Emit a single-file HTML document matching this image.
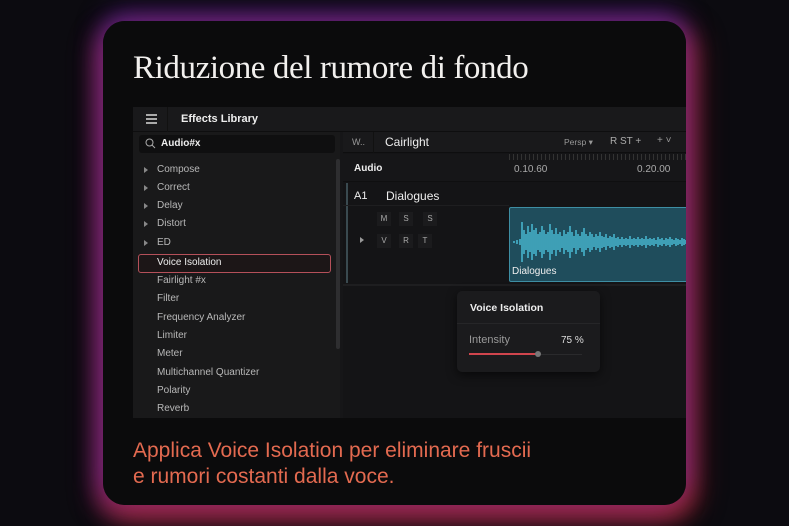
<!DOCTYPE html>
<html><head><style>
*{margin:0;padding:0;box-sizing:border-box}
body{width:789px;height:526px;overflow:hidden;background:#0c0b10;font-family:"Liberation Sans",sans-serif;position:relative}
.glow{position:absolute;left:103px;top:21px;width:583px;height:484px;border-radius:22px;box-shadow:0 -8px 24px 2px rgba(110,40,190,.55),10px 8px 26px 3px rgba(200,45,55,.5),-8px 8px 26px 2px rgba(150,35,130,.45),0 12px 24px 3px rgba(200,60,70,.5)}
.card{position:absolute;left:103px;top:21px;width:583px;height:484px;border-radius:22px;background:#0b0b0c;overflow:hidden}
h1{position:absolute;left:30px;top:29px;font-family:"Liberation Serif",serif;font-weight:normal;font-size:33px;color:#f2f0ee;letter-spacing:-.4px}
.panel{position:absolute;left:30px;top:86px;width:560px;height:311px;background:#161618;color:#ccc;font-size:10px}
.hdr{position:absolute;left:0;top:0;width:560px;height:25px;background:#19191b;border-bottom:1px solid #0e0e0f}
.side{position:absolute;left:0;top:25px;width:207px;height:286px;background:#19191a}
.search{position:absolute;left:6px;top:3px;width:196px;height:18px;background:#0f0f10;border-radius:3px;color:#eee;font-weight:bold;font-size:10px;padding:3px 0 0 22px}
.item{position:absolute;left:24px;font-size:10px;color:#b8b8b8}
.arr{position:absolute;left:11px;width:0;height:0;border-left:4px solid #888;border-top:3px solid transparent;border-bottom:3px solid transparent}
.sel{position:absolute;left:5px;top:122px;width:193px;height:19px;border:1px solid #b5505a;border-radius:3px;background:#1c1617}
.right{position:absolute;left:210px;top:25px;width:350px;height:286px;background:#141416}
.tabs{position:absolute;left:0;top:0;width:350px;height:21px;background:#19191b;border-bottom:1px solid #0e0e0f}
.clip{position:absolute;left:166px;top:75px;width:184px;height:75px;background:#1f4d5c;border:1px solid #3e8ea3;border-radius:2px 0 0 2px}
.pop{position:absolute;left:114px;top:159px;width:143px;height:81px;background:#1b1b1d;border-radius:5px;box-shadow:0 3px 10px rgba(0,0,0,.6)}
.btn{position:absolute;font-size:8px;color:#aaa;width:14px;height:14px;background:#1b1b1d;text-align:center;line-height:14px}
.sub{position:absolute;left:30px;top:417px;font-size:21px;line-height:26px;color:#e36a50}
</style></head><body>
<div class="glow"></div>
<div class="card">
<h1>Riduzione del rumore di fondo</h1>
<div class="panel">
 <div class="hdr">
  <div style="position:absolute;left:13px;top:7px;width:11px;height:1.5px;background:#aaa;box-shadow:0 4px 0 #aaa,0 8px 0 #aaa"></div>
  <div style="position:absolute;left:34px;top:0;width:1px;height:25px;background:#111"></div>
  <div style="position:absolute;left:48px;top:6px;font-size:11px;font-weight:bold;color:#eee">Effects Library</div>
 </div>
 <div class="side">
  <div class="search"><svg style="position:absolute;left:6px;top:3px" width="11" height="11" viewBox="0 0 11 11"><circle cx="4.5" cy="4.5" r="3.5" stroke="#aaa" fill="none"/><path d="M7 7l3 3" stroke="#aaa"/></svg>Audio#x</div>
  <div style="position:absolute;left:203px;top:27px;width:4px;height:190px;background:#2e2e30;border-radius:2px"></div>
  <div class="arr" style="top:35px"></div><div class="item" style="top:32px">Compose</div>
  <div class="arr" style="top:53px"></div><div class="item" style="top:50px">Correct</div>
  <div class="arr" style="top:71px"></div><div class="item" style="top:68px">Delay</div>
  <div class="arr" style="top:89px"></div><div class="item" style="top:86px">Distort</div>
  <div class="arr" style="top:108px"></div><div class="item" style="top:105px">ED</div>
  <div class="sel"></div><div class="item" style="top:125px;color:#eee">Voice Isolation</div>
  <div class="item" style="top:143px">Fairlight #x</div>
  <div class="item" style="top:161px">Filter</div>
  <div class="item" style="top:180px">Frequency Analyzer</div>
  <div class="item" style="top:198px">Limiter</div>
  <div class="item" style="top:216px">Meter</div>
  <div class="item" style="top:235px">Multichannel Quantizer</div>
  <div class="item" style="top:253px">Polarity</div>
  <div class="item" style="top:271px">Reverb</div>
 </div>
 <div class="right">
  <div class="tabs">
   <div style="position:absolute;left:9px;top:5px;color:#999;font-size:9px">W..</div>
   <div style="position:absolute;left:30px;top:0;width:1px;height:21px;background:#111"></div>
   <div style="position:absolute;left:42px;top:3px;color:#eee;font-size:12px">Cairlight</div>
   <div style="position:absolute;left:221px;top:5px;color:#999;font-size:8.5px">Persp ▾</div>
   <div style="position:absolute;left:267px;top:4px;color:#aaa;font-size:10px">R ST +</div>
   <div style="position:absolute;left:314px;top:3px;color:#999;font-size:10px">+ ˅</div>
  </div>
  <div style="position:absolute;left:0;top:22px;width:350px;height:28px;background:#161618;border-bottom:1px solid #0f0f10"></div>
  <div style="position:absolute;left:11px;top:31px;color:#eee;font-weight:bold;font-size:10px">Audio</div>
  <div style="position:absolute;left:166px;top:22px;width:184px;height:6px;background:repeating-linear-gradient(90deg,#333 0 1px,transparent 1px 4px)"></div>
  <div style="position:absolute;left:171px;top:32px;color:#aaa;font-size:10px">0.10.60</div>
  <div style="position:absolute;left:294px;top:32px;color:#aaa;font-size:10px">0.20.00</div>
  <div style="position:absolute;left:3px;top:51px;width:2px;height:100px;background:#3a4a50"></div>
  <div style="position:absolute;left:11px;top:58px;color:#eee;font-size:11px">A1</div>
  <div style="position:absolute;left:43px;top:57px;color:#eee;font-size:12px">Dialogues</div>
  <div style="position:absolute;left:0;top:73px;width:166px;height:1px;background:#1e1e20"></div>
  <div class="btn" style="left:34px;top:80px">M</div><div class="btn" style="left:56px;top:80px">S</div><div class="btn" style="left:80px;top:80px">S</div>
  <div style="position:absolute;left:17px;top:105px;border-left:4px solid #999;border-top:3px solid transparent;border-bottom:3px solid transparent"></div>
  <div class="btn" style="left:34px;top:102px">V</div><div class="btn" style="left:56px;top:102px">R</div><div class="btn" style="left:75px;top:102px">T</div>
  <div style="position:absolute;left:0;top:152px;width:350px;height:2px;background:#1e1e20"></div>
  <div class="clip">
   <svg width="184" height="60" viewBox="0 0 184 60" style="position:absolute;left:0;top:4px"><path d="M4 29v2M7 28v4M10 27v6M12 10v40M14 18v24M16 22v16M18 14v32M20 20v20M22 12v36M24 18v24M26 16v28M28 22v16M30 20v20M32 14v32M34 18v24M36 22v16M38 20v20M40 12v36M42 18v24M44 22v16M46 16v28M48 22v16M50 20v20M52 24v12M54 18v24M56 22v16M58 20v20M60 14v32M62 20v20M64 24v12M66 18v24M68 22v16M70 24v12M72 20v20M74 16v28M76 22v16M78 24v12M80 20v20M82 22v16M84 25v10M86 22v16M88 24v12M90 20v20M92 24v12M94 25v10M96 22v16M98 26v8M100 24v12M102 25v10M104 22v16M106 26v8M108 25v10M110 27v6M112 25v10M114 27v6M116 26v8M118 27v6M120 24v12M122 27v6M124 26v8M126 27v6M128 25v10M130 27v6M132 26v8M134 27v6M136 24v12M138 27v6M140 26v8M142 27v6M144 26v8M146 28v4M148 25v10M150 27v6M152 26v8M154 28v4M156 26v8M158 27v6M160 25v10M162 27v6M164 28v4M166 26v8M168 27v6M170 28v4M172 26v8M174 27v6M176 28v4M178 27v6M180 28v4M182 27v6" stroke="#46b4cc" stroke-width="1.6" fill="none"/></svg>
   <div style="position:absolute;left:2px;top:58px;color:#eee;font-size:10px">Dialogues</div>
  </div>
  <div class="pop">
   <div style="position:absolute;left:13px;top:11px;color:#eee;font-weight:bold;font-size:10.5px">Voice Isolation</div>
   <div style="position:absolute;left:0;top:32px;width:143px;height:1px;background:#262628"></div>
   <div style="position:absolute;left:12px;top:43px;color:#999;font-size:11px">Intensity</div>
   <div style="position:absolute;left:104px;top:44px;color:#ddd;font-size:10px">75 %</div>
   <div style="position:absolute;left:12px;top:62px;width:68px;height:2px;background:#d0454d"></div>
   <div style="position:absolute;left:80px;top:63px;width:45px;height:1px;background:#2a2a2c"></div>
   <div style="position:absolute;left:78px;top:60px;width:6px;height:6px;border-radius:50%;background:#777"></div>
  </div>
 </div>
</div>
<div class="sub">Applica Voice Isolation per eliminare fruscii<br>e rumori costanti dalla voce.</div>
</div>
</body></html>
